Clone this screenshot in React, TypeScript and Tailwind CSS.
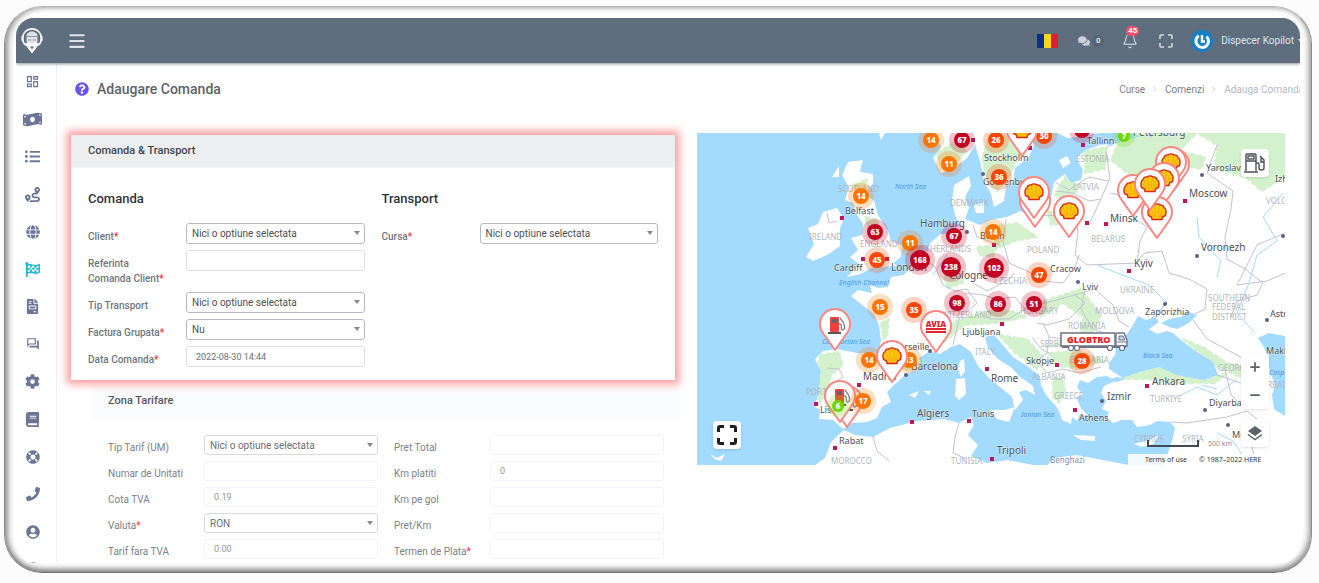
import { useId, type ReactNode } from "react";
import {
  FaBook,
  FaCog,
  FaComments,
  FaFileInvoice,
  FaFlagCheckered,
  FaGlobe,
  FaLifeRing,
  FaListUl,
  FaMoneyBillWave,
  FaPhone,
  FaQuestionCircle,
  FaRoute,
  FaUserCircle,
} from "react-icons/fa";
import { MdOutlineDashboard, MdOutlineForum } from "react-icons/md";
import { Bell, ChevronRight, Menu, Minus, Plus } from "lucide-react";

const menu = [
  { label: "Dashboard", icon: <MdOutlineDashboard size={15} /> },
  { label: "Financiar", icon: <FaMoneyBillWave size={19} /> },
  { label: "Liste", icon: <FaListUl size={15} /> },
  { label: "Rute", icon: <FaRoute size={15} /> },
  { label: "Harta", icon: <FaGlobe size={14} /> },
  { label: "Curse", icon: <FaFlagCheckered size={15} />, active: true },
  { label: "Facturi", icon: <FaFileInvoice size={15} /> },
  { label: "Mesaje", icon: <MdOutlineForum size={14} /> },
  { label: "Setari", icon: <FaCog size={15} /> },
  { label: "Manual", icon: <FaBook size={15} /> },
  { label: "Suport", icon: <FaLifeRing size={14} /> },
  { label: "Telefon", icon: <FaPhone size={14} /> },
  { label: "Cont", icon: <FaUserCircle size={14} /> },
  { label: "Profil", icon: <FaUserCircle size={14} /> },
];

function Logo() {
  return (
    <svg viewBox="0 0 22 27" className="h-[27px] w-[22px]" fill="none">
      <path d="M5 18.500A9.400 9.400 0 1 1 17 18.500" stroke="#f1f4f7" strokeWidth="1.600" />
      <path d="M5.500 9c0-6 11-6 11 0v6l-2 4H7.500l-2-4z" fill="#dde2e7" />
      <path d="M6 9.500h10M7 13h3M12 13h3" stroke="#8d99a6" strokeWidth="1" />
      <path d="M4 16.500l3-1 4 1 4-1 3 1-3 5-4 5-4-5z" fill="#fff" />
      <path d="M9 19.500h4l-2 3z" fill="#5e6e7f" />
      <path d="M1.500 9v5M20.500 9v5" stroke="#fff" strokeWidth="2" />
    </svg>
  );
}

function Header() {
  return (
    <header className="relative z-10 flex h-[45px] shrink-0 items-center overflow-hidden bg-[#5e6e7f] text-[#dfe4e9] shadow-[0_1px_3px_rgba(60,70,85,0.6)]">
      <a href="#acasa" aria-label="Kopilot" className="ml-[5px]">
        <Logo />
      </a>
      <button aria-label="Meniu" className="ml-6">
        <Menu size={20} strokeWidth={2.5} />
      </button>
      <div className="-mr-1 ml-auto flex shrink-0 items-center">
        <button aria-label="Romana" className="flex h-[14px] w-[21px]">
          <span className="h-full flex-1 bg-[#0a2f8f]" />
          <span className="h-full flex-1 bg-[#fcd51c]" />
          <span className="h-full flex-1 bg-[#dc1f33]" />
        </button>
        <button className="ml-5 flex items-center gap-[2px] text-[8px] font-bold">
          <FaComments size={12} className="text-[#cbd2d9]" />
          <span className="w-3 rounded-full bg-[#566575] leading-3">0</span>
        </button>
        <button aria-label="Notificari" className="relative ml-[18px]">
          <Bell size={16} strokeWidth={1.6} />
          <span className="absolute -top-[7px] left-1 rounded-full bg-[#f4516c] px-[2px] text-[8px] leading-[10px] font-bold text-white">
            45
          </span>
        </button>
        <button aria-label="Ecran complet" className="ml-[21px]">
          <svg viewBox="0 0 14 14" className="size-[14px]" fill="none" stroke="#d3d9df" strokeWidth="1.600">
            <path d="M1 5V2q0-1 1-1h3M9 1h3q1 0 1 1v3M13 9v3q0 1-1 1H9M5 13H2q-1 0-1-1V9" />
          </svg>
        </button>
        <button className="ml-[18px] flex items-center gap-2 text-[10px]">
          <svg viewBox="0 0 22 22" className="size-[22px]" fill="none">
            <circle cx="11" cy="11" r="11" fill="#1580c8" />
            <path d="M7.800 5.800A6.300 6.300 0 1 0 15.500 6.500" stroke="#fff" strokeWidth="3" />
            <path d="M11 5v6.500h3" stroke="#fff" strokeWidth="2.500" />
          </svg>
          <span>Dispecer Kopilot</span>
          <svg viewBox="0 0 6 4" className="-ml-1 h-1 w-[6px]" fill="#dfe4e9">
            <path d="M0 0h6L3 4z" />
          </svg>
        </button>
      </div>
    </header>
  );
}

function Sidebar() {
  return (
    <nav className="h-full w-[41px] shrink-0 overflow-hidden border-r border-[#eef0f3]">
      <ul className="flex h-[525px] flex-col text-[#6c7595]">
        {menu.map((item) => (
          <li key={item.label} className="flex flex-1 items-center justify-center pr-[7px]">
            <a
              href={"#" + item.label.toLowerCase()}
              aria-label={item.label}
              className={item.active ? "text-[#22b9d2]" : undefined}
            >
              {item.icon}
            </a>
          </li>
        ))}
      </ul>
    </nav>
  );
}

type FieldProps = {
  label: ReactNode;
  required?: boolean;
  select?: boolean;
  value?: string;
  faded?: boolean;
};

function Field({ label, required, select, value = "", faded }: FieldProps) {
  const id = useId();
  const height = faded ? "h-5" : "h-[21px]";

  return (
    <div className="flex items-start">
      <label
        htmlFor={id}
        className={
          faded
            ? "w-24 shrink-0 pt-[5px] text-[10px] leading-[15px] text-[#7b828b]"
            : "w-[98px] shrink-0 pt-[6px] text-[10px] leading-[15px] font-medium text-[#70767d]"
        }
      >
        {label}
        {required && <span className="text-[#fd2c3c]">*</span>}
      </label>
      {select ? (
        <div className="relative min-w-0 flex-1">
          <select
            id={id}
            className={`${height} block w-full appearance-none rounded-[3px] border bg-white px-[5px] text-[10px] ${
              faded ? "border-[#d9dadd] text-[#6b6f74]" : "border-[#b9babd] text-[#4c5055]"
            }`}
          >
            <option>{value}</option>
          </select>
          <svg viewBox="0 0 6 4" className="pointer-events-none absolute top-2 right-[5px] h-1 w-[6px]" fill="#888">
            <path d="M0 0h6L3 4z" />
          </svg>
        </div>
      ) : (
        <input
          id={id}
          defaultValue={value}
          className={`${height} min-w-0 flex-1 rounded-[3px] border bg-white px-[9px] text-[9px] ${
            faded ? "border-[#f3f4f7] text-[#92969b]" : "border-[#dcdfe5] text-[#6a6f75]"
          }`}
        />
      )}
    </div>
  );
}

function OrderCard() {
  return (
    <section className="relative z-10 mr-[5px] bg-white shadow-[0_0_8px_4px_rgba(255,85,85,0.6)]">
      <h2 className="border-b border-[#f4f5f6] bg-[#edeef0] px-[17px] text-[11px] leading-8 font-medium text-[#3f454b]">
        Comanda &amp; Transport
      </h2>
      <div className="grid grid-cols-2 gap-x-[17px] px-[17px] pt-[21px] pb-[13px]">
        <div className="flex flex-col gap-[6px]">
          <h3 className="mb-2 text-[13px] leading-5 font-medium text-[#2d3338]">Comanda</h3>
          <Field label="Client" required select value="Nici o optiune selectata" />
          <Field
            label={
              <>
                Referinta
                <br />
                Comanda Client
              </>
            }
            required
          />
          <Field label="Tip Transport" select value="Nici o optiune selectata" />
          <Field label="Factura Grupata" required select value="Nu" />
          <Field label="Data Comanda" required value="2022-08-30 14:44" />
        </div>
        <div className="flex flex-col gap-[6px]">
          <h3 className="mb-2 text-[13px] leading-5 font-medium text-[#2d3338]">Transport</h3>
          <Field label="Cursa" required select value="Nici o optiune selectata" />
        </div>
      </div>
    </section>
  );
}

function TariffCard() {
  return (
    <section className="ml-[21px]">
      <h2 className="bg-[#fbfcfe] px-4 pt-1 text-[11px] leading-[34px] font-medium text-[#53585e]">Zona Tarifare</h2>
      <div className="grid grid-cols-2 gap-x-4 gap-y-[6px] px-4 pt-[17px]">
        <Field faded label="Tip Tarif (UM)" select value="Nici o optiune selectata" />
        <Field faded label="Pret Total" />
        <Field faded label="Numar de Unitati" />
        <Field faded label="Km platiti" value="0" />
        <Field faded label="Cota TVA" value="0.19" />
        <Field faded label="Km pe gol" />
        <Field faded label="Valuta" required select value="RON" />
        <Field faded label="Pret/Km" />
        <Field faded label="Tarif fara TVA" value="0.00" />
        <Field faded label="Termen de Plata" required />
      </div>
    </section>
  );
}

const land = [
  // mainland, clockwise from the Gulf of Finland
  "M423 0H588V203L572 200 561 205 567 214 570 222 573 239 578 252 575 262 577 276 588 283V332H468L471 320 475 308 478 295 473 289 460 288 453 292 440 294 435 287 425 287 416 290 410 285 412 279 405 276 409 268 404 260 407 253 418 248 410 243 400 244 391 250 383 247 380 254 386 262 379 264 384 275 392 284 383 281 380 288 375 284 374 291 365 287 362 278 358 272 349 262 344 252 343 243 330 233 316 224 305 211 297 202 288 204 291 215 301 226 315 235 322 243 336 253 338 262 329 257 322 259 326 267 318 277 315 264 303 254 291 244 281 233 274 219 263 211 254 214 243 221 233 218 222 225 224 234 208 242 196 253 190 259 194 269 185 274 180 285 170 289 155 290 146 296 136 287 122 286 123 277 117 273 122 261 124 238 118 226 126 218 140 216 160 220 180 221 184 208 182 192 177 181 164 171 154 163 161 157 175 160 173 152 181 155 191 154 194 144 207 142 215 133 227 125 233 110 244 101 254 101 262 92 258 82 255 68 257 52 272 43 274 53 268 64 272 75 268 86 283 92 293 87 310 84 323 78 336 82 345 79 353 70 357 49 368 41 374 50 384 47 386 37 379 25 389 17 403 12 416 11Z",
  // Norway and Sweden
  "M238 0 244 14 236 25 244 40 256 36 270 25 278 12 283 28 287 48 294 61 297 74 307 68 309 53 316 49 318 35 332 24 337 12 331 0Z",
  "M361 0 370 5 386 3 403 0Z",
  // British Isles
  "M151 29 166 27 163 39 176 41 176 50 169 61 177 68 181 82 191 98 194 108 205 113 204 124 196 130 201 133 176 134 164 141 150 144 162 131 153 124 161 117 154 105 165 102 166 91 160 82 156 70 148 67 152 54 145 42Z",
  "M126 79 140 75 147 86 143 95 143 113 132 121 116 128 109 124 117 111 111 95 121 91Z",
  "M135 44 142 33 142 44Z",
  // North Africa
  "M118 332 128 325 134 309 147 297 158 302 176 304 193 295 220 288 247 286 262 290 274 284 277 292 271 302 281 312 274 323 290 330 310 327 336 332Z",
  "M351 332 356 325 380 322 400 326 432 332Z",
  // islands
  "M277 72 287 69 287 80 279 80ZM263 228 267 226 268 238 264 244 261 236ZM259 246 268 245 269 261 262 267 258 263ZM293 277 308 277 318 274 312 289 300 286ZM212 262 222 258 218 265ZM227 258 234 258 232 262ZM376 302 398 303 398 308 384 307ZM437 311 452 307 462 302 456 311 445 314ZM355 51 351 57 357 48ZM362 27 370 23 374 30 366 35ZM182 0 188 0 184 7ZM13 321 20 325 28 321 24 328 18 326Z",
];

const forest = [
  "M290 8 302 3 325 0 333 10 320 26 312 45 300 58 291 50 285 26Z",
  "M240 20 256 10 270 18 258 30 244 36Z",
  "M425 0H500L482 18 508 24 504 36 474 30 455 48 430 40 414 27Z",
  "M500 0H588V44L565 58 548 44 518 36 520 12Z",
  "M388 18 410 14 408 36 388 40Z",
  "M368 44 382 52 374 68 358 62Z",
  "M295 94 320 90 340 104 318 108 300 116Z",
  "M350 78 386 82 376 90 354 92Z",
  "M122 222 142 219 146 232 134 242 130 262 122 270Z",
  "M180 222 222 229 214 238 188 232Z",
  "M184 190 192 186 190 204 186 206Z",
  "M240 200 258 188 290 178 316 178 330 184 300 190 268 192 246 210Z",
  "M302 202 330 206 346 224 340 236 318 220Z",
  "M340 170 384 156 404 182 392 208 348 214 382 206 386 184 366 170 344 184Z",
  "M352 220 382 218 408 228 380 236 358 232Z",
  "M424 246 460 234 506 247 530 240 518 250 480 250 452 246Z",
  "M486 206 506 214 530 230 560 236 572 244 548 246 520 234Z",
  "M157 52 170 46 168 62 160 66ZM168 84 180 86 182 96 172 100Z",
  "M246 136 262 130 266 150 250 156ZM280 114 300 112 296 124 282 122Z",
  "M150 274 162 272 160 282 146 284Z",
  "M356 246 366 244 368 258 362 270 356 264Z",
];

const borders = [
  "M358 58 376 60 392 68 404 66 413 45 409 18M358 49 372 57 392 44 411 48M344 82 383 84 392 92 404 66M379 84 381 100 378 122 390 132 440 130 443 108 450 94 436 84 438 66 413 60M440 128 448 120 465 118 472 140 492 146 510 156 508 176 492 184 486 180",
  "M309 86 306 108 312 130 330 138 346 148 366 150 378 134 382 122M303 112 280 104 276 92M276 150 290 158 306 150 318 140M226 125 238 134 246 152 258 158 270 156 280 170 262 186 256 212M268 160 286 162 300 166 318 164 328 176 312 186 292 186",
  "M328 176 348 170 378 162 388 170 372 186 350 192 340 190M378 162 398 156 416 172 422 188 432 194M388 156 384 176 396 196 420 204M346 190 352 204 350 220 340 228 350 240 366 236 382 240 404 234M352 204 376 208 410 206M335 204 344 216 352 220",
  "M278 12 280 30M180 221 200 226 222 232M130 235 142 236 146 244 136 250 134 264 128 276M176 304 180 318 192 328M262 290 258 304 256 320 270 326M474 289 490 290 530 284 550 278 560 286 552 304 560 332M528 236 534 262 548 276M520 242 544 250 572 258M494 184 510 206 540 222 560 234",
  "M440 60 446 80M520 12 510 40 536 58 534 76 528 104 530 126 548 136 566 150 560 162 540 168 534 184M588 100 560 112 540 152 570 148 588 140M130 80 132 90 140 88",
];

const rivers =
  "M586 60 566 84 580 108 560 122 552 150 540 180 558 200M400 132 420 140 452 152 470 170 454 186M500 84 502 104 524 128 520 144M448 40 470 36 486 48M330 40 336 28M505 252 520 256M236 142 250 122M410 298 404 286M484 262 500 254 520 262 540 246M520 300 536 308 548 326";

type Label = [string, number, number, number?];

const cities: Label[] = [
  ["Stockholm", 287, 28, 9],
  ["Tallinn", 390, 11, 9],
  ["Petersburg", 436, 3, 10],
  ["Gothenburg", 286, 52, 9],
  ["Yaroslavl", 509, 38, 9],
  ["Izhevsk", 578, 49, 9],
  ["Moscow", 492, 64],
  ["Minsk", 413, 89],
  ["Voronezh", 504, 118],
  ["Kyiv", 437, 134],
  ["Cracow", 353, 139, 9],
  ["Lviv", 385, 157, 9],
  ["Belfast", 148, 81, 9],
  ["Cardiff", 137, 138, 9],
  ["London", 194, 138],
  ["Hamburg", 223, 94],
  ["Berlin", 283, 106, 9],
  ["Cologne", 252, 146],
  ["Zaporizhia", 448, 182, 9],
  ["Astrakhan", 573, 184, 9],
  ["Makhachkala", 569, 221, 9],
  ["Ljubljana", 265, 202, 9],
  ["Marseille", 194, 217, 9],
  ["Barcelona", 214, 237],
  ["Madrid", 166, 247],
  ["Lisbon", 123, 280, 9],
  ["Rabat", 142, 311, 9],
  ["Algiers", 220, 284],
  ["Tunis", 275, 284, 9],
  ["Tripoli", 300, 321],
  ["Rome", 294, 249],
  ["Skopje", 329, 231, 9],
  ["Athens", 382, 288, 9],
  ["Izmir", 410, 267],
  ["Ankara", 455, 252],
  ["Diyarbakir", 512, 273, 9],
  ["Mosul", 535, 305, 9],
];

const countries: Label[] = [
  ["SCOTLAND", 141, 59],
  ["IRELAND", 112, 107],
  ["ENGLAND", 163, 114],
  ["DENMARK", 253, 73],
  ["NETHERLANDS", 218, 119],
  ["ESTONIA", 379, 29],
  ["LATVIA", 376, 57],
  ["BELARUS", 394, 109],
  ["POLAND", 330, 120],
  ["CZECHIA", 297, 151],
  ["UKRAINE", 423, 160],
  ["VOLGA", 569, 71],
  ["SOUTHERN", 511, 168],
  ["FEDERAL", 515, 177],
  ["DISTRICT", 515, 187],
  ["HUNGARY", 323, 181],
  ["MOLDOVA", 398, 181],
  ["ROMANIA", 371, 196],
  ["SERBIA", 343, 214],
  ["BULGARIA", 373, 230],
  ["SWITZERLAND", 240, 185],
  ["ITALY", 278, 222],
  ["ALBANIA", 335, 247],
  ["GREECE", 357, 266],
  ["TURKIYE", 453, 269],
  ["GEORGIA", 521, 238],
  ["AZERBAIJAN", 556, 255],
  ["SYRIA", 485, 309],
  ["CYPRUS", 437, 309],
  ["TUNISIA", 254, 331],
  ["MOROCCO", 134, 331],
  ["PORTUGAL", 109, 262],
];

const seas: Label[] = [
  ["North Sea", 198, 56],
  ["English Channel", 142, 152],
  ["Cantabrian Sea", 125, 211],
  ["Ionian Sea", 324, 284],
  ["Black Sea", 446, 225],
  ["Caspian Sea", 572, 242],
];

const dots = [
  [276, 7], [333, 15], [386, 12], [488, 68], [409, 91], [432, 138], [145, 85], [166, 126], [190, 126],
  [297, 112], [390, 90], [305, 191], [290, 236], [360, 232], [378, 277], [450, 253], [162, 252], [119, 271],
  [138, 315], [215, 289], [272, 288], [295, 326],
];

const towns = [
  [505, 42], [500, 123], [381, 149], [270, 99], [286, 41], [468, 171], [586, 103], [570, 187], [508, 277], [405, 268],
  [209, 242], [233, 218], [531, 292],
];

type ClusterData = [n: number, x: number, y: number, color: string, r?: number];

const clusters: ClusterData[] = [
  [14, 234, 7, "#fd7600"],
  [67, 265, 7, "#c20022"],
  [26, 299, 7, "#fb4600"],
  [30, 347, 3, "#fb4600"],
  [11, 252, 31, "#fd7600"],
  [36, 302, 44, "#fb4600"],
  [67, 385, -3, "#c20022"],
  [7, 427, 3, "#6cd900", 6],
  [14, 164, 63, "#fd7600"],
  [63, 178, 99, "#c20022"],
  [11, 213, 110, "#fd7600"],
  [45, 180, 127, "#fb4600"],
  [168, 223, 127, "#c20022", 10],
  [67, 257, 103, "#c20022"],
  [238, 254, 134, "#c20022", 10],
  [14, 296, 99, "#fd7600"],
  [102, 297, 135, "#c20022", 10],
  [47, 342, 142, "#fb4600"],
  [98, 260, 170, "#c20022"],
  [86, 301, 171, "#c20022"],
  [51, 337, 171, "#c20022"],
  [15, 183, 174, "#fd7600"],
  [35, 217, 177, "#fb4600"],
  [14, 172, 227, "#fd7600"],
  [13, 212, 227, "#fd7600"],
  [28, 385, 228, "#fb4600"],
];

const topClusters: ClusterData[] = [
  [17, 166, 268, "#fd7600"],
  [6, 141, 273, "#6cd900", 6],
];

type Brand = "shell" | "pump" | "avia";

// brand and the position of the pin's tip
const pins: [Brand, number, number][] = [
  ["shell", 325, 23],
  ["shell", 338, 94],
  ["shell", 337, 85],
  ["shell", 372, 104],
  ["shell", 477, 57],
  ["shell", 474, 55],
  ["shell", 467, 71],
  ["shell", 436, 83],
  ["shell", 460, 105],
  ["shell", 453, 77],
  ["pump", 138, 217],
  ["shell", 195, 249],
  ["avia", 239, 219],
  ["pump", 150, 294],
  ["pump", 143, 289],
];

function Clusters({ items }: { items: ClusterData[] }) {
  return items.map(([n, x, y, color, r = 8]) => (
    <g key={`${x}-${y}`} transform={`translate(${x} ${y})`}>
      <circle r={r + 5} fill={color} opacity="0.24" />
      <circle r={r} fill={color} />
      <text y="3" textAnchor="middle" fontSize="8" fontWeight="800" fill="#fff">
        {n}
      </text>
    </g>
  ));
}

function Pin({ brand, x, y }: { brand: Brand; x: number; y: number }) {
  return (
    <g transform={`translate(${x} ${y})`}>
      <path d="M0 0 -12 -17A15 15 0 1 1 12 -17Z" fill="#fff" stroke="#fc8782" strokeWidth="2" strokeLinejoin="round" />
      {brand === "shell" && (
        <g transform="translate(0 -26)">
          <path
            d="M-5 7.500-5.500 5-8.500 3.500C-9.500 0-9-3-7-4.500-6.500-6.500-4.500-7.500-3-7-1.500-8.500 1.500-8.500 3-7 4.500-7.500 6.500-6.500 7-4.500 9-3 9.500 0 8.500 3.500L5.500 5 5 7.500Z"
            fill="#fdc70c"
            stroke="#e2231a"
            strokeWidth="1.400"
          />
          <path d="M-1 5-2.500-6M1 5 2.500-6M-2.500 5-6-3.500M2.500 5 6-3.500M-4 4.500-7.500 0M4 4.500 7.500 0" stroke="#f39a17" strokeWidth="0.700" />
        </g>
      )}
      {brand === "pump" && (
        <g transform="translate(0 -25)">
          <rect x="-5" y="-8" width="9" height="15" rx="1" fill="#f4403a" />
          <rect x="-3" y="-6" width="5" height="4" fill="#5f6770" />
          <path d="M-7 8h13" stroke="#555" strokeWidth="2" />
          <path d="M4-1c4-1 1 7 4 6s1-6 0-8L5-7" fill="none" stroke="#7b8087" strokeWidth="1.300" />
        </g>
      )}
      {brand === "avia" && (
        <g transform="translate(0 -25)">
          <text y="0" textAnchor="middle" fontSize="8" fontWeight="900" fill="#e0242b">
            AVIA
          </text>
          <path d="M-10 2H10M-10 5H10" stroke="#e0242b" strokeWidth="2" />
        </g>
      )}
    </g>
  );
}

function Truck() {
  return (
    <g transform="translate(363 199)">
      <rect x="1" y="1" width="54" height="13" fill="#fff" stroke="#6b7385" strokeWidth="1.500" />
      <path d="M56 3q0-2 2-2h6l3 7v6H56z" fill="#fff" stroke="#6b7385" strokeWidth="1.300" />
      <path d="M59 4h4l2 4h-6zM57 10h10" fill="#cbd2e2" stroke="#6b7385" />
      <path d="M2 15h64" stroke="#6b7385" strokeWidth="2" />
      {[11, 17, 50, 62].map((cx) => (
        <circle key={cx} cx={cx} cy="16" r="2.500" fill="#fff" stroke="#6b7385" strokeWidth="1.200" />
      ))}
      <text x="7" y="11" fontSize="9" fontWeight="900" fill="#f01822">
        GLOBTRO
      </text>
    </g>
  );
}

function MapCanvas() {
  return (
    <svg
      viewBox="0 0 588 332"
      role="img"
      aria-label="Harta statii"
      className="block w-full bg-[#a3daff] font-['Noto_Sans',sans-serif]"
    >
      <defs>
        <clipPath id="land">
          {land.map((d) => (
            <path key={d} d={d} />
          ))}
        </clipPath>
      </defs>
      {land.map((d) => (
        <path key={d} d={d} fill="#fff" />
      ))}
      <g clipPath="url(#land)" fill="none">
        {forest.map((d) => (
          <path key={d} d={d} fill="#d3f1cc" stroke="#d3f1cc" strokeWidth="2" strokeLinejoin="round" strokeDasharray="5 2" />
        ))}
        {borders.map((d) => (
          <path key={d} d={d} stroke="#c3c1d3" strokeWidth="1" strokeLinejoin="round" />
        ))}
        <path d={rivers} stroke="#a3daff" strokeWidth="1" />
      </g>
      <path
        d="M436 192 441 183 449 187 458 184 462 189 452 196 460 201 470 198 476 200 484 207 500 219 516 229 521 242 506 247 480 242 462 234 443 239 426 245 412 236 412 230 418 222 421 205 430 201Z"
        fill="#a3daff"
      />
      <path d="M464 190 472 186 484 184 490 178 500 182 492 190 480 196 472 194Z" fill="#a3daff" />
      <path d="M404 3 412 14 420 10 444 3 430 0ZM410 247 420 244 428 246 420 249ZM451 0 458 0 454 5ZM300 8 306 6 304 14Z" fill="#a3daff" />

      <g fill="#b0b7bd" fontSize="8">
        {countries.map(([name, x, y]) => (
          <text key={name} x={x} y={y}>
            {name}
          </text>
        ))}
      </g>
      <g fill="#4b96e6" fontSize="7" fontStyle="italic">
        {seas.map(([name, x, y]) => (
          <text key={name} x={x} y={y}>
            {name}
          </text>
        ))}
      </g>
      <text x="353" y="330" fontSize="8" fill="#7d8fa8">
        Benghazi
      </text>
      {dots.map(([x, y]) => (
        <rect key={`${x}-${y}`} x={x - 2} y={y - 2} width="4" height="4" fill="#c4145a" />
      ))}
      {towns.map(([x, y]) => (
        <circle key={`${x}-${y}`} cx={x} cy={y} r="2" fill="#5b6180" />
      ))}
      <g fill="#4a4f57" stroke="#fff" strokeWidth="1" strokeOpacity="0.6" paintOrder="stroke">
        {cities.map(([name, x, y, size = 10]) => (
          <text key={name} x={x} y={y} fontSize={size}>
            {name}
          </text>
        ))}
      </g>

      <Clusters items={clusters} />
      {pins.map(([brand, x, y]) => (
        <Pin key={`${x}-${y}`} brand={brand} x={x} y={y} />
      ))}
      <Clusters items={topClusters} />
      <Truck />

      <rect x="431" y="321" width="157" height="11" fill="#fff" opacity="0.85" />
      <path d="M451 307v6h50v-6" fill="none" stroke="#444a50" strokeWidth="2" />
      <text x="511" y="313" fontSize="7" fill="#8a8f95">
        500 km
      </text>
      <g fontSize="7" fill="#30353a">
        <text x="448" y="329">Terms of use</text>
        <text x="502" y="329">© 1987–2022 HERE</text>
      </g>
    </svg>
  );
}

function MapPanel() {
  return (
    <div className="relative">
      <MapCanvas />
      <button
        aria-label="Ecran complet harta"
        className="absolute bottom-4 left-4 flex size-7 items-center justify-center rounded bg-white shadow"
      >
        <svg viewBox="0 0 20 20" className="size-5" fill="none" stroke="#1d1f22" strokeWidth="3">
          <path d="M1.500 7V3q0-1.500 1.500-1.500H7M13 1.500h4q1.500 0 1.500 1.500v4M18.500 13v4q0 1.500-1.500 1.500H13M7 18.500H3q-1.500 0-1.500-1.500V13" />
        </svg>
      </button>
      <button
        aria-label="Statii"
        className="absolute top-4 right-4 flex size-7 items-center justify-center rounded bg-white shadow"
      >
        <svg viewBox="0 0 22 22" className="size-[22px]" fill="none" stroke="#4b4f55" strokeWidth="1.400">
          <path d="M2 19V3q0-1 1-1h8q1 0 1 1v16M0 20h14M2 9h10" />
          <rect x="4" y="4" width="6" height="3" />
          <path d="M12 11h2q1 0 1 1v4q0 2 2.500 2t2.500-2V8l-4-4M17 6v4h3" />
        </svg>
      </button>
      <div className="absolute right-4 bottom-[18px] flex w-7 flex-col gap-[10px] text-[#5d6369]">
        <div className="flex flex-col rounded bg-white shadow">
          <button aria-label="Mareste" className="flex h-7 items-center justify-center">
            <Plus size={14} strokeWidth={3} />
          </button>
          <button aria-label="Micsoreaza" className="flex h-7 items-center justify-center">
            <Minus size={14} strokeWidth={3} />
          </button>
        </div>
        <button aria-label="Straturi" className="flex h-7 items-center justify-center rounded bg-white shadow">
          <svg viewBox="0 0 16 16" className="size-4" fill="#5d6369">
            <path d="M8 1 15 6 8 11 1 6Z" />
            <path d="M1 9.500 8 14.500 15 9.500" fill="none" stroke="#5d6369" strokeWidth="1.500" />
          </svg>
        </button>
      </div>
    </div>
  );
}

export default function App() {
  return (
    <div className="h-screen overflow-hidden bg-[#fcfcfc] pt-[6px] pr-[7px] pb-[10px] pl-1 font-[Roboto,sans-serif]">
      <div className="h-full rounded-[38px] border border-t-[#b5b5b5] border-r-[#8c8c8c] border-b-[#707070] border-l-[#8c8c8c] bg-white px-[11px] pt-[11px] pb-[9px] shadow-[inset_3px_0_6px_rgba(0,0,0,0.4),inset_-2px_-3px_6px_rgba(0,0,0,0.4)]">
        <div className="flex h-full flex-col overflow-hidden rounded-t-[18px] rounded-b-[20px] bg-white">
          <Header />
          <div className="flex min-h-0 flex-1">
            <Sidebar />
            <main className="min-w-0 flex-1 overflow-hidden">
              <div className="flex h-[52px] items-center pl-[18px]">
                <FaQuestionCircle size={14} className="text-[#6a55e6]" />
                <h1 className="ml-2 text-[14px] font-medium text-[#5d6268]">Adaugare Comanda</h1>
                <nav className="-mr-1 ml-auto flex items-center gap-[5px] text-[10px] text-[#7c8187]">
                  <a href="#curse">Curse</a>
                  <ChevronRight size={10} className="text-[#c9ccd1]" />
                  <a href="#comenzi">Comenzi</a>
                  <ChevronRight size={10} className="text-[#c9ccd1]" />
                  <span className="text-[#b4b9c3]">Adauga Comanda</span>
                </nav>
              </div>
              <div className="flex items-start gap-[17px] pt-[18px] pr-[15px] pl-[14px]">
                <div className="min-w-0 flex-[609] pt-[2px]">
                  <OrderCard />
                  <TariffCard />
                </div>
                <div className="min-w-0 flex-[588]">
                  <MapPanel />
                </div>
              </div>
            </main>
          </div>
        </div>
      </div>
    </div>
  );
}
